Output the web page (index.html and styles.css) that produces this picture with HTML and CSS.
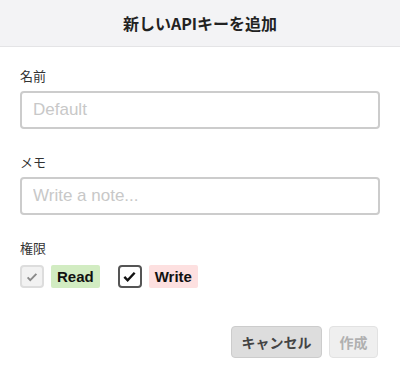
FILE: index.html
```html
<!DOCTYPE html>
<html lang="ja">

<head>
    <meta charset="UTF-8">
    <meta name="viewport" content="width=device-width, initial-scale=1.0">
    <title>新しいAPIキーを追加</title>
    <link rel="stylesheet" href="styles.css">
</head>

<body>
    <div class="modal">
        <div class="modal-header">
            <h2>新しいAPIキーを追加</h2>
        </div>
        <form class="modal-body">
            <div class="form-group">
                <label for="key-name">名前</label>
                <input type="text" id="key-name" placeholder="Default">
            </div>
            <div class="form-group">
                <label for="key-note">メモ</label>
                <input type="text" id="key-note" placeholder="Write a note...">
            </div>
            <div class="form-group">
                <label>権限</label>
                <div class="perms">
                    <span class="perm">
                        <span class="check disabled">
                            <svg viewBox="0 0 16 16" width="14" height="14"><path d="M3 8.5l3 3 7-7" fill="none" stroke="#8a8a8a" stroke-width="2.2"/></svg>
                        </span>
                        <span class="tag tag-read">Read</span>
                    </span>
                    <span class="perm">
                        <span class="check">
                            <svg viewBox="0 0 16 16" width="15" height="15"><path d="M2.5 8.5l3.5 3.5 7.5-8" fill="none" stroke="#111" stroke-width="2.6"/></svg>
                        </span>
                        <span class="tag tag-write">Write</span>
                    </span>
                </div>
            </div>
            <div class="actions">
                <button type="button" class="btn btn-cancel">キャンセル</button>
                <button type="submit" class="btn btn-create" disabled>作成</button>
            </div>
        </form>
    </div>
</body>

</html>
```

FILE: styles.css
```css
body {
    margin: 0;
    padding: 0;
    background-color: #ffffff;
    font-family: "Noto Sans CJK JP", "Liberation Sans", sans-serif;
    color: #333333;
}

.modal {
    width: 400px;
    height: 376px;
    display: flex;
    flex-direction: column;
}

.modal-header {
    height: 46px;
    background-color: #f3f3f5;
    border-bottom: 1px solid #e4e4e6;
    display: flex;
    justify-content: center;
    align-items: center;
}

.modal-header h2 {
    margin: 0;
    font-size: 16px;
    font-weight: bold;
    color: #222222;
}

.modal-body {
    padding: 21px 20px 0 20px;
    display: flex;
    flex-direction: column;
}

.form-group {
    display: flex;
    flex-direction: column;
    margin-bottom: 25px;
}

.form-group label {
    font-size: 13px;
    line-height: 16px;
    margin-bottom: 7px;
    color: #333333;
}

.form-group input {
    box-sizing: border-box;
    width: 360px;
    height: 38px;
    border: 2px solid #cccccc;
    border-radius: 4px;
    padding: 0 11px;
    font-size: 17px;
    font-family: "Liberation Sans", sans-serif;
    color: #333333;
    outline: none;
}

.form-group input::placeholder {
    color: #c8c8c8;
}

.perms {
    display: flex;
    align-items: center;
    gap: 18px;
    margin-top: 2px;
}

.perm {
    display: flex;
    align-items: center;
    gap: 7px;
}

.check {
    box-sizing: border-box;
    width: 24px;
    height: 23px;
    border: 2px solid #555555;
    border-radius: 4px;
    display: flex;
    justify-content: center;
    align-items: center;
}

.check.disabled {
    border-color: #dddddd;
    background-color: #f2f2f2;
}

.tag {
    font-family: "Liberation Sans", sans-serif;
    font-size: 15px;
    font-weight: bold;
    color: #111111;
    padding: 2px 6px;
    border-radius: 2px;
    line-height: 19px;
}

.tag-read {
    background-color: #d2ecc2;
}

.tag-write {
    background-color: #fde0e0;
}

.actions {
    display: flex;
    justify-content: flex-end;
    gap: 7px;
    margin-top: 13px;
    padding-right: 2px;
}

.btn {
    height: 32px;
    border-radius: 4px;
    font-family: "Noto Sans CJK JP", sans-serif;
    font-size: 14px;
    font-weight: bold;
    padding: 0;
    white-space: nowrap;
}

.btn-cancel {
    width: 91px;
    background-color: #dddddd;
    border: 1px solid #cccccc;
    color: #444444;
}

.btn-create {
    width: 49px;
    background-color: #efefef;
    border: 1px solid #e2e2e2;
    color: #b0b0b0;
}
```
